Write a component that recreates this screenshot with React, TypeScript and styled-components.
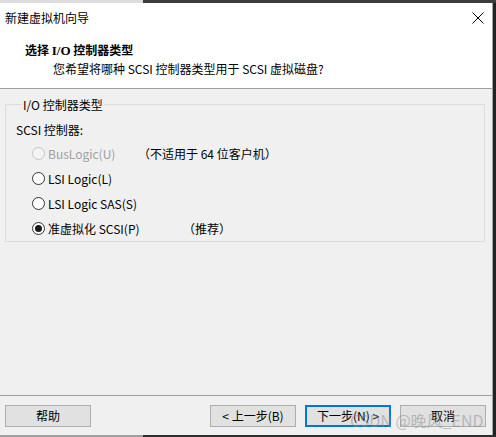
import React from "react";
import styled, { createGlobalStyle } from "styled-components";

const Global = createGlobalStyle`
  html, body { margin: 0; padding: 0; }
  body {
    width: 496px;
    height: 437px;
    overflow: hidden;
    background: #2b2b2b;
    font-family: "Noto Sans CJK SC", sans-serif;
  }
`;

const Screen = styled.div`
  position: relative;
  width: 496px;
  height: 437px;
  display: flex;
  flex-direction: column;
`;

const EdgeStrip = styled.div<{ $h: number }>`
  flex: none;
  height: ${(p) => p.$h}px;
  display: flex;
`;

const EdgeLight = styled.div<{ $color: string }>`
  width: 143px;
  background: ${(p) => p.$color};
`;

const EdgeDark = styled.div<{ $color: string }>`
  flex: 1;
  background: ${(p) => p.$color};
`;

const Middle = styled.div`
  flex: 1;
  min-height: 0;
  display: flex;
`;

const Window = styled.div`
  width: 492px;
  border-right: 1px solid #a6a6a6;
  display: flex;
  flex-direction: column;
  background: #f0f0f0;
  color: #000;
  font-size: 12px;
`;

const RightEdge = styled.div`
  flex: 1;
  background: #222;
`;

const TitleBar = styled.div`
  height: 30px;
  flex: none;
  display: flex;
  align-items: center;
  background: #fff;
  padding-left: 5px;
`;

const TitleText = styled.div`
  flex: 1;
  line-height: 16px;
`;

const CloseBox = styled.div`
  width: 28px;
  height: 30px;
  display: flex;
  align-items: center;
  justify-content: center;
`;

const Header = styled.div`
  flex: none;
  height: 56px;
  box-sizing: border-box;
  background: #fff;
  border-bottom: 1px solid #a0a0a0;
  padding: 9px 0 0 25px;
`;

const Heading = styled.div`
  font-weight: bold;
  line-height: 16px;
`;

const HeadingLatin = styled.span`
  font-family: "Liberation Serif", "Noto Sans CJK SC", serif;
  font-size: 13px;
`;

const Subtitle = styled.div`
  margin: 2px 0 0 28px;
  line-height: 16px;
`;

const Body = styled.div`
  flex: 1;
  min-height: 0;
  display: flex;
  flex-direction: column;
`;

const Content = styled.div`
  flex: 1;
  padding: 7px 7px 0 5px;
`;

const Group = styled.fieldset`
  margin: 0;
  padding: 8px 0 0 10px;
  border: 1px solid #dcdcdc;
  min-width: 0;
`;

const GroupLegend = styled.legend`
  margin-left: 6px;
  padding: 0 1px;
  line-height: 17px;
`;

const FieldLabel = styled.div`
  line-height: 17px;
`;

const OptionList = styled.div`
  margin-top: 3px;
  padding-left: 16px;
  display: flex;
  flex-direction: column;
`;

const OptionRow = styled.div`
  height: 25px;
  display: flex;
  align-items: center;
`;

const OptionMain = styled.label<{ $width?: number }>`
  display: flex;
  align-items: center;
  gap: 3px;
  ${(p) => (p.$width ? `width: ${p.$width}px;` : "")}
  flex: none;
`;

const RadioCircle = styled.span<{ $disabled?: boolean }>`
  width: 13px;
  height: 13px;
  box-sizing: border-box;
  border-radius: 50%;
  border: 1px solid ${(p) => (p.$disabled ? "#c4c4c4" : "#333")};
  background: ${(p) => (p.$disabled ? "#f4f4f4" : "#fff")};
  display: flex;
  align-items: center;
  justify-content: center;
  flex: none;
`;

const RadioDot = styled.span`
  width: 7px;
  height: 7px;
  border-radius: 50%;
  background: #1a1a1a;
`;

const OptionText = styled.span<{ $disabled?: boolean }>`
  line-height: 17px;
  color: ${(p) => (p.$disabled ? "#a0a0a0" : "#000")};
`;

const Note = styled.span`
  line-height: 17px;
`;

const Footer = styled.div`
  flex: none;
  height: 30px;
  border-top: 1px solid #a0a0a0;
  padding: 9px 6px 0 5px;
  display: flex;
  align-items: flex-start;
`;

const ButtonGroup = styled.div`
  margin-left: auto;
  display: flex;
  gap: 9px;
`;

const Button = styled.button<{ $default?: boolean }>`
  width: 86px;
  height: 22px;
  box-sizing: border-box;
  margin: 0;
  padding: 0;
  background: #e1e1e1;
  border: ${(p) => (p.$default ? "2px solid #0078d7" : "1px solid #adadad")};
  font-family: "Noto Sans CJK SC", sans-serif;
  font-size: 12px;
  line-height: 16px;
  color: #000;
  display: flex;
  align-items: center;
  justify-content: center;
`;

const Watermark = styled.div`
  position: absolute;
  left: 350px;
  top: 410px;
  font-family: "Noto Sans CJK SC", sans-serif;
  font-size: 16px;
  line-height: 20px;
  color: rgba(140, 140, 140, 0.5);
  white-space: nowrap;
  pointer-events: none;
`;

type Opt = {
  text: string;
  checked?: boolean;
  disabled?: boolean;
  note?: string;
  width?: number;
};

const options: Opt[] = [
  { text: "BusLogic(U)", disabled: true, note: "（不适用于 64 位客户机）", width: 106 },
  { text: "LSI Logic(L)" },
  { text: "LSI Logic SAS(S)" },
  { text: "准虚拟化 SCSI(P)", checked: true, note: "（推荐）", width: 151 },
];

export default function App() {
  return (
    <>
      <Global />
      <Screen>
        <EdgeStrip $h={3}>
          <EdgeLight $color="#dcdcdc" />
          <EdgeDark $color="#3c3c3c" />
        </EdgeStrip>
        <Middle>
          <Window>
            <TitleBar>
              <TitleText>新建虚拟机向导</TitleText>
              <CloseBox>
                <svg width="12" height="12" viewBox="0 0 12 12">
                  <path d="M0.5 0.5 L11.5 11.5 M11.5 0.5 L0.5 11.5" stroke="#000" strokeWidth="1" fill="none" />
                </svg>
              </CloseBox>
            </TitleBar>
            <Header>
              <Heading>
                选择 <HeadingLatin>I/O</HeadingLatin> 控制器类型
              </Heading>
              <Subtitle>您希望将哪种 SCSI 控制器类型用于 SCSI 虚拟磁盘?</Subtitle>
            </Header>
            <Body>
              <Content>
                <Group>
                  <GroupLegend>I/O 控制器类型</GroupLegend>
                  <FieldLabel>SCSI 控制器:</FieldLabel>
                  <OptionList>
                    {options.map((o) => (
                      <OptionRow key={o.text}>
                        <OptionMain $width={o.width}>
                          <RadioCircle $disabled={o.disabled}>
                            {o.checked && <RadioDot />}
                          </RadioCircle>
                          <OptionText $disabled={o.disabled}>{o.text}</OptionText>
                        </OptionMain>
                        {o.note && <Note>{o.note}</Note>}
                      </OptionRow>
                    ))}
                  </OptionList>
                </Group>
              </Content>
              <Footer>
                <Button>帮助</Button>
                <ButtonGroup>
                  <Button>&lt; 上一步(B)</Button>
                  <Button $default>下一步(N) &gt;</Button>
                  <Button>取消</Button>
                </ButtonGroup>
              </Footer>
            </Body>
          </Window>
          <RightEdge />
        </Middle>
        <EdgeStrip $h={2}>
          <EdgeLight $color="#a0a0a0" />
          <EdgeDark $color="#2d2d2d" />
        </EdgeStrip>
        <Watermark>CSDN @晚风_END</Watermark>
      </Screen>
    </>
  );
}
